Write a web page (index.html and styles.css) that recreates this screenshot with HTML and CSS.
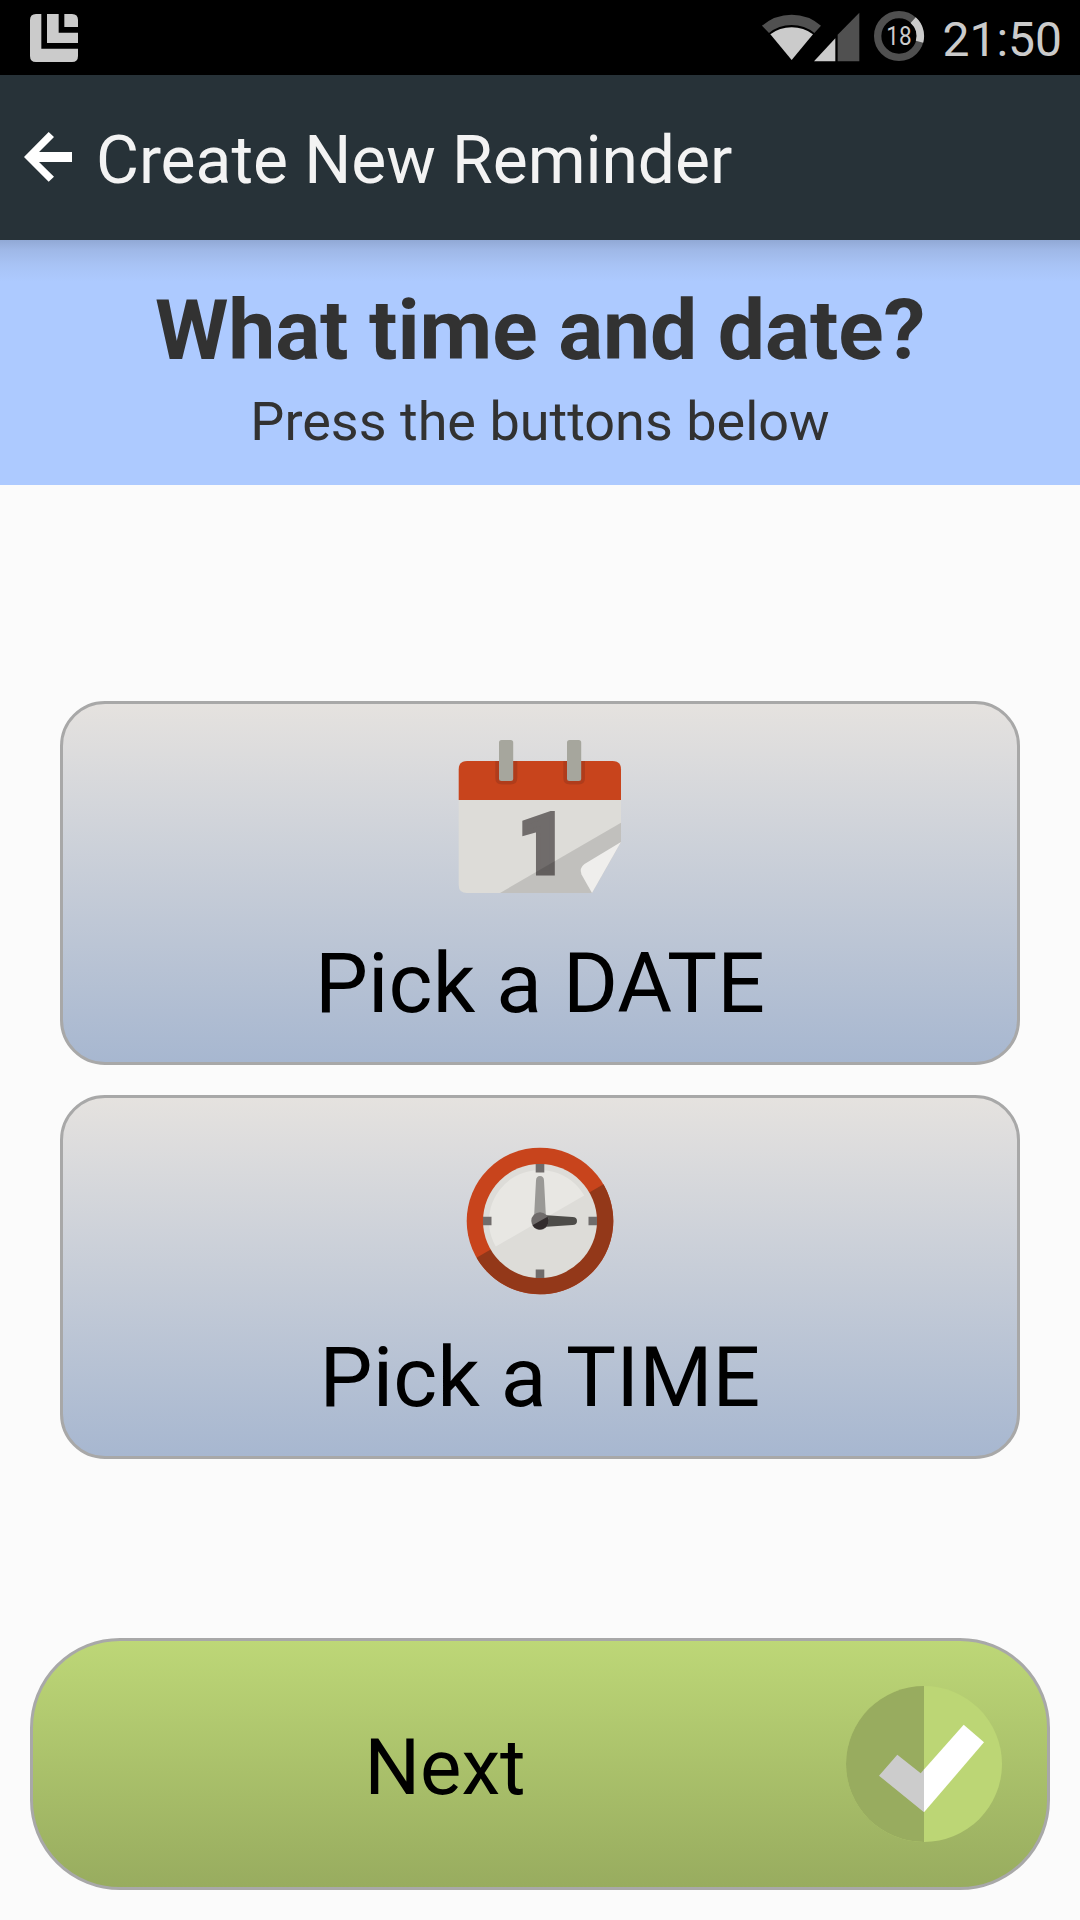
FILE: index.html
```html
<!DOCTYPE html>
<html lang="en">
<head>
<meta charset="utf-8">
<title>Create New Reminder</title>
<link rel="stylesheet" href="styles.css">
</head>
<body>
<div class="status-bar">
  <svg class="app-icon" viewBox="90 41 144 144">
    <path fill="#cbcbcb" d="M108 41H124V145H234V167Q234 185 216 185H108Q90 185 90 167V59Q90 41 108 41ZM141 41H176V97H234V128H141ZM193 41H216Q234 41 234 59V80H193Z"/>
  </svg>
  <div class="status-right">
    <svg class="status-icons" viewBox="60 0 510 225">
      <path fill="#505050" d="M66 77Q105 44 155 44Q205 44 243 77L223 99Q194 75 155 75Q116 75 87 99Z"/>
      <path fill="#cbcbcb" d="M155 180L91 103Q119 82 155 82Q191 82 219 103Z"/>
      <path fill="#cbcbcb" d="M222 184L286 115V184Z"/>
      <path fill="#505050" d="M293 184V104L358 38V184Z"/>
      <circle cx="477" cy="108" r="64" fill="none" stroke="#505050" stroke-width="22"/>
      <path fill="none" stroke="#cbcbcb" stroke-width="23" d="M519.5 60.5A64 64 0 0 1 538.5 125"/>
      <text class="battery-level" x="439" y="136" textLength="76" lengthAdjust="spacingAndGlyphs">18</text>
    </svg>
    <span class="clock">21:50</span>
  </div>
</div>
<header class="app-bar">
  <svg class="back" viewBox="72 396 144 150">
    <path fill="#fff" d="M72 471L146 396L162 411L117 456H216V486H117L162 530L146 545Z"/>
  </svg>
  <span class="title">Create New Reminder</span>
</header>
<section class="prompt">
  <h1>What time and date?</h1>
  <p>Press the buttons below</p>
</section>
<main class="content">
  <div class="picker">
    <svg class="picker-icon" viewBox="0 0 180 180">
      <path fill="#c8441c" d="M8.7 63V32.5Q8.7 24 17.2 24H162.5Q171 24 171 32.5V63Z"/>
      <path fill="#dddcd8" d="M8.7 63H171V105L142 156H17Q8.7 156 8.7 148Z"/>
      <path fill="#b03c1b" d="M45.3 24H67.3V41Q67.3 47.5 60.5 47.5H52Q45.3 47.5 45.3 41ZM113.3 24H135V41Q135 47.5 128.5 47.5H120Q113.3 47.5 113.3 41Z"/>
      <rect x="49" y="3" width="14.2" height="41" rx="2.5" fill="#a6a69d"/>
      <rect x="117" y="3" width="14.2" height="41" rx="2.5" fill="#a6a69d"/>
      <text class="day" x="68" y="135.7">1</text>
      <path fill="#000" fill-opacity=".125" d="M50 156L171 85.7V105L142 156Z"/>
      <path fill="#efeeec" d="M171 105L142 156L131.5 137.5Q129 131 134.5 127Z"/>
    </svg>
    <span class="picker-label">Pick a DATE</span>
  </div>
  <div class="picker">
    <svg class="picker-icon" viewBox="0 0 180 180">
      <circle cx="90" cy="90" r="73.3" fill="#c8441c"/>
      <path fill="#933819" d="M26.5 126.65A73.3 73.3 0 0 0 153.5 53.35Z"/>
      <circle cx="90" cy="90" r="57" fill="#dddcd8"/>
      <path fill="#e8e7e3" d="M45.8 115.5A51 51 0 0 1 134.2 64.5Z"/>
      <path fill="#706c6b" d="M85.7 33h8.6v8.5h-8.6zM85.7 138.5h8.6v8.5h-8.6zM33 85.7h8.5v8.6h-8.5zM138.5 85.7h8.5v8.6h-8.5z"/>
      <path fill="#9a9996" d="M84 87L86 49.5Q86.2 45 90 45Q93.8 45 94 49.5L96 87Z"/>
      <path fill="#4d4c49" d="M93 84L122.5 86Q127 86.2 127 90Q127 93.8 122.5 94L93 96Z"/>
      <circle cx="90" cy="90" r="8.7" fill="#706c6b"/>
      <path fill="#322c2d" d="M82.47 94.35A8.7 8.7 0 0 0 97.53 85.65Z"/>
    </svg>
    <span class="picker-label">Pick a TIME</span>
  </div>
</main>
<div class="next">
  <span class="next-label">Next</span>
  <svg class="next-icon" viewBox="0 0 180 180">
    <circle cx="90" cy="90" r="78" fill="#bcd675"/>
    <path fill="#98ac5f" d="M90 12A78 78 0 0 0 90 168Z"/>
    <path fill="#ccc" d="M63.3 80.7L86.7 99.3L90 95.6V138.3L45 101.7Z"/>
    <path fill="#fff" d="M90 95.6L129.7 50.7L150 68.3L90 138.3Z"/>
  </svg>
</div>
</body>
</html>
```
FILE: styles.css
```css
* { box-sizing: border-box; }
body {
  margin: 0;
  width: 1080px;
  height: 1920px;
  overflow: hidden;
  display: flex;
  flex-direction: column;
  background: #fbfbfb;
  font-family: Roboto, "Noto Sans", sans-serif;
}
svg { display: block; flex: none; }
.status-bar {
  height: 75px;
  flex: none;
  display: flex;
  align-items: center;
  justify-content: space-between;
  padding: 0 18px 0 30px;
  background: #000;
}
.app-icon { width: 48px; height: 48px; }
.status-right { display: flex; align-items: center; gap: 12px; }
.status-icons { width: 170px; height: 75px; }
.battery-level { font-size: 78px; fill: #cbcbcb; }
.clock { font-size: 48px; line-height: 60px; padding-top: 4px; color: #cbcbcb; }
.app-bar {
  height: 165px;
  flex: none;
  display: flex;
  align-items: center;
  gap: 24px;
  padding: 0 24px;
  background: #273238;
}
.back { width: 48px; height: 50px; margin-bottom: 1px; }
.title { font-size: 66px; line-height: 80px; padding-top: 6px; letter-spacing: -0.05px; color: #f3f3f3; white-space: nowrap; }
.prompt {
  height: 245px;
  flex: none;
  padding-top: 42px;
  text-align: center;
  color: #323232;
  background: linear-gradient(#91a9d5 0, #9fb8e7 10px, #a8c3f5 25px, #adcaff 42px);
}
.prompt h1 { margin: 0 0 10px; font-size: 84px; line-height: 98px; letter-spacing: -0.12px; font-weight: 700; }
.prompt p { margin: 0; font-size: 54px; line-height: 64px; }
.content {
  display: flex;
  flex-direction: column;
  gap: 30px;
  padding: 216px 60px 179px;
}
.picker {
  height: 364px;
  display: flex;
  flex-direction: column;
  align-items: center;
  gap: 18px;
  padding-top: 33px;
  border: 3px solid #a8a8a8;
  border-radius: 45px;
  background: linear-gradient(#e5e2df, #a7b7d0);
}
.picker-icon { width: 180px; height: 180px; }
.picker-label { font-size: 84px; line-height: 98px; letter-spacing: 0.1px; color: #000; white-space: nowrap; }
.day { font: 900 84px Roboto, sans-serif; fill: #706c6b; stroke: #706c6b; stroke-width: 5px; }
.next {
  height: 252px;
  flex: none;
  display: flex;
  align-items: center;
  margin: 0 30px;
  padding: 0 33px 0 23px;
  border: 3px solid #a8a8a8;
  border-radius: 90px;
  background: linear-gradient(#bdd777, #98ac5f);
}
.next-label { flex: 1; font-size: 78px; line-height: 92px; padding-top: 8px; text-align: center; color: #000; }
.next-icon { width: 180px; height: 180px; }
```
